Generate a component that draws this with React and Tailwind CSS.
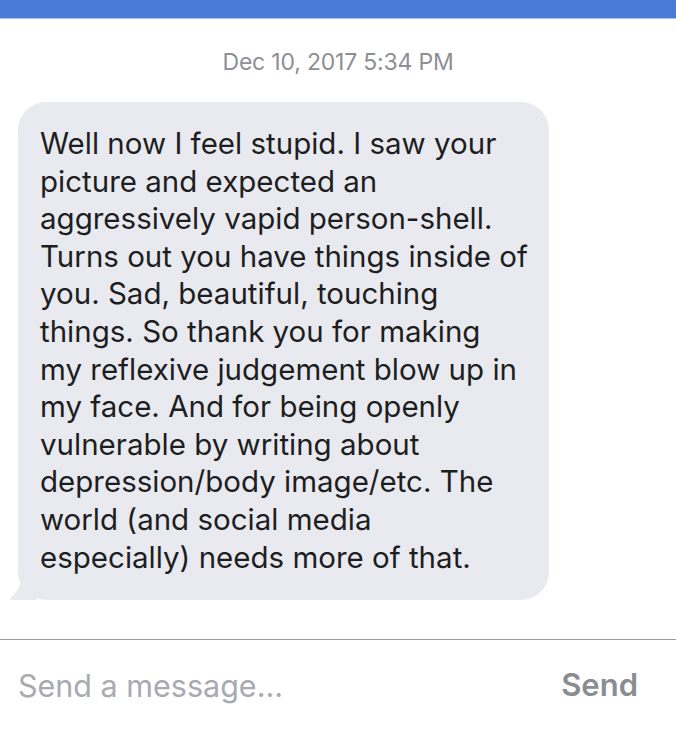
import React from 'react';

const lines = [
  "Well now I feel stupid. I saw your",
  "picture and expected an",
  "aggressively vapid person-shell.",
  "Turns out you have things inside of",
  "you. Sad, beautiful, touching",
  "things. So thank you for making",
  "my reflexive judgement blow up in",
  "my face. And for being openly",
  "vulnerable by writing about",
  "depression/body image/etc. The",
  "world (and social media",
  "especially) needs more of that.",
];

export default function App() {
  return (
    <div className="w-[676px] h-[731px] bg-white flex flex-col overflow-hidden font-['Inter','Liberation_Sans',sans-serif]">
      {/* top bar */}
      <div className="h-[19px] bg-[#4b7bd8] border-b border-[#a9c6f0] shrink-0" />

      {/* thread */}
      <div className="flex-1 flex flex-col">
        <p className="text-center text-[23px] leading-[28px] text-[#8e8f95] mt-[29px] tracking-[-0.2px]">Dec 10, 2017 5:34 PM</p>

        <div className="relative ml-[18px] mt-[26px] w-[531px]">
          <div className="bg-[#e9eaef] rounded-[28px] pl-[22px] pr-[12px] pt-[23px] pb-[24px]">
            <p className="text-[29.5px] leading-[37.6px] text-[#1d1e22]">
              {lines.map((l) => (
                <span key={l} className="block whitespace-nowrap">{l}</span>
              ))}
            </p>
          </div>
          {/* tail */}
          <svg className="absolute -left-[11px] bottom-0" width="30" height="22" viewBox="0 0 30 22">
            <path d="M30 0 L30 22 L10 22 Q4 22 2 21 Q10 16 14 4 Z" fill="#e9eaef" />
          </svg>
        </div>
      </div>

      {/* composer */}
      <div className="h-[92px] border-t border-[#9b9b9b] flex items-center justify-between pl-[18px] pr-[38px] shrink-0">
        <span className="text-[30.5px] text-[#a8aab0] tracking-[0px]">Send a message...</span>
        <span className="text-[31px] font-semibold text-[#8a8c92]">Send</span>
      </div>
    </div>
  );
}
